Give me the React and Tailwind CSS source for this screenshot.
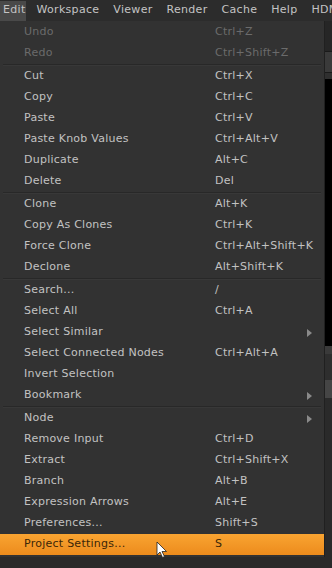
import React from "react";

const menuBar = ["Workspace", "Viewer", "Render", "Cache", "Help", "HDM"];

const groups = [
  [
    { label: "Undo", keys: "Ctrl+Z", disabled: true },
    { label: "Redo", keys: "Ctrl+Shift+Z", disabled: true },
  ],
  [
    { label: "Cut", keys: "Ctrl+X" },
    { label: "Copy", keys: "Ctrl+C" },
    { label: "Paste", keys: "Ctrl+V" },
    { label: "Paste Knob Values", keys: "Ctrl+Alt+V" },
    { label: "Duplicate", keys: "Alt+C" },
    { label: "Delete", keys: "Del" },
  ],
  [
    { label: "Clone", keys: "Alt+K" },
    { label: "Copy As Clones", keys: "Ctrl+K" },
    { label: "Force Clone", keys: "Ctrl+Alt+Shift+K" },
    { label: "Declone", keys: "Alt+Shift+K" },
  ],
  [
    { label: "Search...", keys: "/" },
    { label: "Select All", keys: "Ctrl+A" },
    { label: "Select Similar", sub: true },
    { label: "Select Connected Nodes", keys: "Ctrl+Alt+A" },
    { label: "Invert Selection" },
    { label: "Bookmark", sub: true },
  ],
  [
    { label: "Node", sub: true },
    { label: "Remove Input", keys: "Ctrl+D" },
    { label: "Extract", keys: "Ctrl+Shift+X" },
    { label: "Branch", keys: "Alt+B" },
    { label: "Expression Arrows", keys: "Alt+E" },
    { label: "Preferences...", keys: "Shift+S" },
    { label: "Project Settings...", keys: "S", active: true },
  ],
];

function MenuItem({ item }) {
  const color = item.active
    ? "text-[#3b2608]"
    : item.disabled
    ? "text-[#6b6b6b]"
    : "text-[#c2c2c2]";
  return (
    <div
      className={`relative flex h-[21px] items-center whitespace-nowrap ${color} ${
        item.active ? "bg-gradient-to-b from-[#f9a431] to-[#ec8b1c]" : ""
      }`}
    >
      <span className="w-[215px] pl-[24px]">{item.label}</span>
      <span className="flex-1">{item.keys}</span>
      {item.sub && (
        <svg className="absolute right-[12px] top-[7px]" width="5" height="8" viewBox="0 0 5 8">
          <path d="M0 0L5 4L0 8Z" fill="#8a8a8a" />
        </svg>
      )}
    </div>
  );
}

export default function App() {
  return (
    <div
      className="relative h-[568px] w-[332px] overflow-hidden bg-[#2a2a2a] text-[11px] tracking-[0.25px]"
      style={{ fontFamily: '"DejaVu Sans", Verdana, sans-serif' }}
    >
      <div className="flex h-[21px] items-center gap-[14px] whitespace-nowrap bg-[#2c2c2c] text-[11px] tracking-[0.3px] text-[#c4c4c4]">
        <span className="-mr-[3px] flex h-[20px] w-[26px] items-center bg-[#494949] pl-[3px]">Edit</span>
        {menuBar.map((m) => (
          <span key={m}>{m}</span>
        ))}
      </div>

      <div className="flex">
        <div className="w-[325px] border-r border-[#202020] bg-[#323232] pt-[1px] pb-[2px]">
          {groups.map((g, gi) => (
            <div key={gi}>
              {gi > 0 && <div className="mx-[3px] h-[2px] border-t border-[#282828] border-b border-b-[#383838]" />}
              {g.map((item) => (
                <MenuItem key={item.label} item={item} />
              ))}
            </div>
          ))}
        </div>
        <div className="flex flex-1 flex-col">
          <div className="h-[30px] bg-[#262626]" />
          <div className="h-[22px] border-y border-[#1a1a1a] bg-[#3a3a3a]" />
          <div className="h-[6px] bg-[#2f2f2f]" />
          <div className="h-[267px] bg-black" />
          <div className="h-[8px] bg-[#3a3a3a]" />
          <div className="h-[26px] bg-[#2e2e2e]" />
          <div className="h-[18px] bg-[#454545]" />
          <div className="flex-1 bg-[#2a2a2a]" />
        </div>
      </div>

      <svg className="absolute left-[156px] top-[541px]" width="12" height="18" viewBox="0 0 12 18">
        <path d="M1 1L1 14L4 11L6.5 16.5L8.5 15.5L6 10.5L10.5 10.5Z" fill="#ffffff" stroke="#222" strokeWidth="0.8" />
      </svg>
    </div>
  );
}
